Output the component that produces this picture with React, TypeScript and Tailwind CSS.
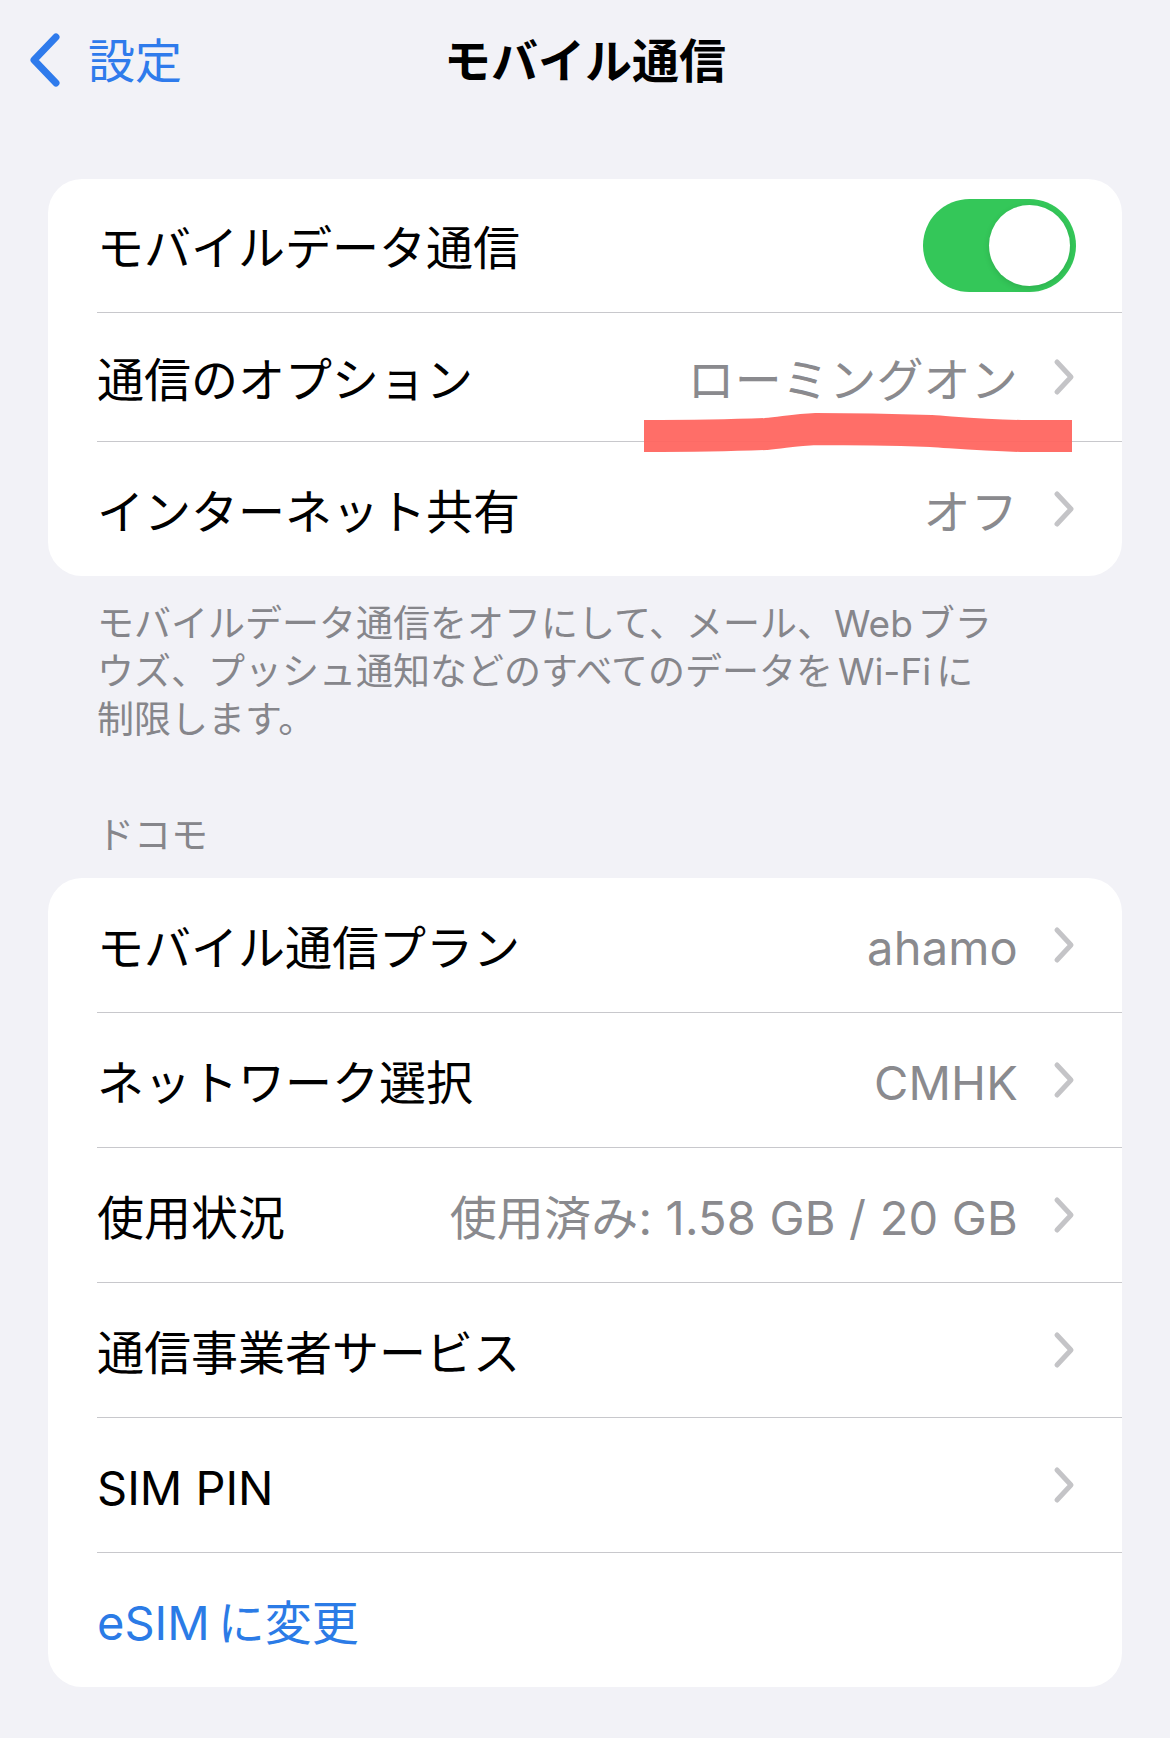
import React from "react";

const font = { fontFamily: 'Inter, "Noto Sans CJK JP", sans-serif' };

const Chevron = () => (
	<svg width="22" height="38" viewBox="0 0 22 38" className="ml-[35px] shrink-0">
		<path d="M4 4 L18 19 L4 34" fill="none" stroke="#c4c4c7" strokeWidth="5" strokeLinecap="round" strokeLinejoin="round" />
	</svg>
);

type RowProps = {
	label: string;
	value?: string;
	h: string;
	last?: boolean;
	chevron?: boolean;
	children?: React.ReactNode;
};

const Row = ({ label, value, h, last, chevron = true, children }: RowProps) => (
	<div className="pl-[49px]">
		<div className={`flex items-center pr-[47px] ${h} ${last ? "" : "border-b border-[#c8c8cc]"}`}>
			<span className="pt-[6px] text-[47px] text-black whitespace-nowrap">{label}</span>
			<div className="flex-1" />
			{value && <span className="pt-[6px] text-[47px] text-[#8a8a8e] whitespace-nowrap tracking-[0.2px]">{value}</span>}
			{children}
			{chevron && <Chevron />}
		</div>
	</div>
);

const App = () => {
	return (
		<div className="w-[1170px] h-[1738px] bg-[#f2f2f7] overflow-hidden" style={font}>
			<header className="grid grid-cols-[1fr_auto_1fr] items-center h-[122px]">
				<div className="flex items-center pl-[28px]">
					<svg width="33" height="56" viewBox="0 0 33 56" className="mt-[-2px]">
						<path d="M28 5 L6 28 L28 51" fill="none" stroke="#2f7bec" strokeWidth="7" strokeLinecap="round" strokeLinejoin="round" />
					</svg>
					<span className="ml-[27px] text-[47px] text-[#2f7bec]">設定</span>
				</div>
				<h1 className="text-[47px] font-bold text-black">モバイル通信</h1>
				<div />
			</header>

			<section className="relative mt-[57px] mx-[48px] bg-white rounded-[34px]">
				<Row label="モバイルデータ通信" h="h-[134px]" chevron={false}>
					<div className="flex items-center justify-end w-[153px] h-[93px] rounded-full bg-[#34c759] pr-[6px] mr-[-1px]">
						<div className="w-[81px] h-[81px] rounded-full bg-white shadow-[0_2px_6px_rgba(0,0,0,0.12)]" />
					</div>
				</Row>
				<Row label="通信のオプション" value="ローミングオン" h="h-[129px]" />
				<Row label="インターネット共有" value="オフ" h="h-[134px]" last />

				<svg width="435" height="46" viewBox="0 0 435 46" className="absolute left-[593px] top-[232px]">
					<path
						d="M3 25 C 60 25, 100 24, 125 23 C 145 21, 155 19, 175 18 C 220 18, 260 19, 290 20 C 320 22, 340 24, 380 25 C 400 25, 420 25, 431 25"
						fill="none"
						stroke="#ff6660"
						strokeOpacity="0.95"
						strokeWidth="32"
						strokeLinecap="butt"
					/>
				</svg>
			</section>

			<p className="mt-[24px] px-[97px] text-[37px] leading-[48px] text-[#86868b] whitespace-nowrap">
				モバイルデータ通信をオフにして、メール、Web<span className="ml-[5px]">ブラ</span>
				<br />
				ウズ、プッシュ通知などのすべてのデータを<span className="mx-[5px]">Wi-Fi</span>に
				<br />
				制限します。
			</p>

			<div className="mt-[68px] px-[97px] text-[37px] leading-[48px] text-[#86868b]">ドコモ</div>

			<section className="mt-[18px] mx-[48px] bg-white rounded-[34px]">
				<Row label="モバイル通信プラン" value="ahamo" h="h-[135px]" />
				<Row label="ネットワーク選択" value="CMHK" h="h-[135px]" />
				<Row label="使用状況" value="使用済み: 1.58 GB / 20 GB" h="h-[135px]" />
				<Row label="通信事業者サービス" h="h-[135px]" />
				<Row label="SIM PIN" h="h-[135px]" />
				<div className="pl-[49px] flex items-center h-[134px]">
					<span className="pt-[6px] text-[47px] text-[#2b7be6]">
						eSIM<span className="ml-[8px]">に変更</span>
					</span>
				</div>
			</section>
		</div>
	);
};

export default App;
